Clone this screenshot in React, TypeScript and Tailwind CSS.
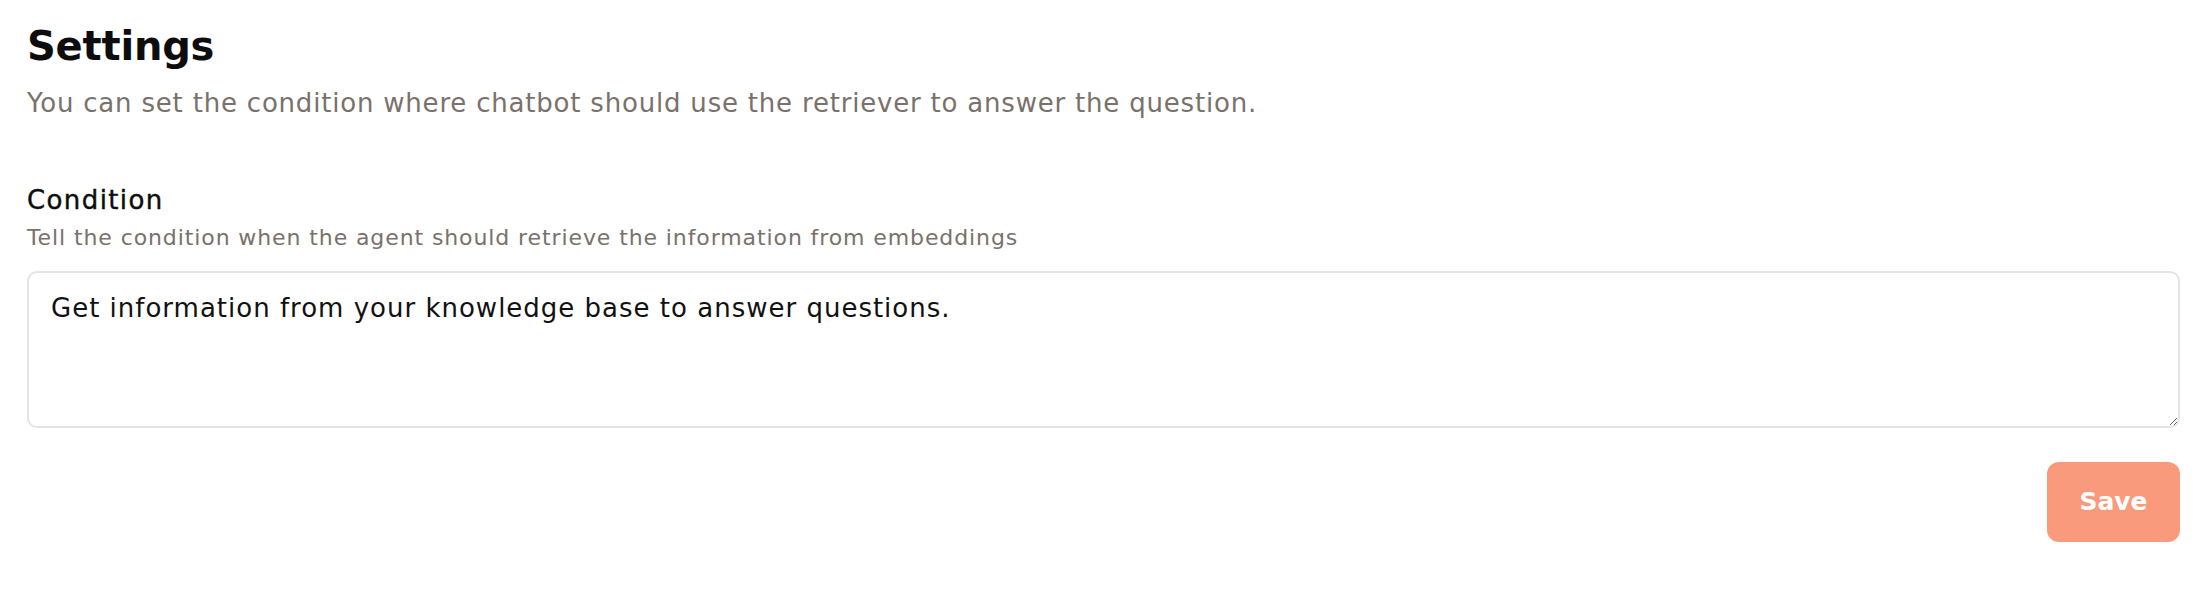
import { useState } from "react";

const FONT = "font-['DejaVu_Sans','Noto_Sans',sans-serif]";

export default function App() {
  const [condition, setCondition] = useState(
    "Get information from your knowledge base to answer questions."
  );

  return (
    <div className={`min-h-screen bg-white pl-[27px] pr-[30px] pt-[22px] ${FONT}`}>
      <h1 className="text-[40px] leading-[48px] font-bold text-[#0d0d0d] tracking-[-0.2px]">Settings</h1>
      <p className="mt-[16px] text-[26px] leading-[34px] tracking-[0.8px] text-[#79716b]">
        You can set the condition where chatbot should use the retriever to answer the question.
      </p>

      <div className="mt-[65px]">
        <h2 className="text-[26px] leading-[30px] tracking-[1.4px] text-[#0d0d0d] [-webkit-text-stroke:0.4px_#0d0d0d]">
          Condition
        </h2>
        <p className="mt-[10px] text-[22px] leading-[26px] tracking-[0.9px] text-[#79716b]">
          Tell the condition when the agent should retrieve the information from embeddings
        </p>

        <textarea
          value={condition}
          onChange={(e) => setCondition(e.target.value)}
          className="mt-[20px] block w-full h-[157px] rounded-[10px] border-2 border-[#e4e4e4] pl-[22px] pr-4 pt-[17px] text-[26px] leading-[36px] tracking-[1px] text-[#111] outline-none"
        />
      </div>

      <div className="mt-[34px] flex justify-end">
        <button className="h-[80px] w-[133px] rounded-[12px] bg-[#fa9a7c] text-[25px] font-bold text-white">
          Save
        </button>
      </div>
    </div>
  );
}
